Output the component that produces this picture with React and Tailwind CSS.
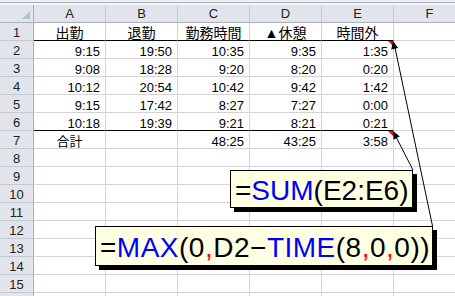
import React from "react";

const cols = ["A", "B", "C", "D", "E", "F"];

const data = [
  ["出勤", "退勤", "勤務時間", "▲休憩", "時間外", ""],
  ["9:15", "19:50", "10:35", "9:35", "1:35", ""],
  ["9:08", "18:28", "9:20", "8:20", "0:20", ""],
  ["10:12", "20:54", "10:42", "9:42", "1:42", ""],
  ["9:15", "17:42", "8:27", "7:27", "0:00", ""],
  ["10:18", "19:39", "9:21", "8:21", "0:21", ""],
  ["合計", "", "48:25", "43:25", "3:58", ""],
];

function arrowHead(fx, fy, tx, ty) {
  const dx = tx - fx;
  const dy = ty - fy;
  const len = Math.sqrt(dx * dx + dy * dy);
  const ux = dx / len;
  const uy = dy / len;
  const bx = tx - ux * 8;
  const by = ty - uy * 8;
  const px = -uy * 3.5;
  const py = ux * 3.5;
  return `${tx},${ty} ${bx + px},${by + py} ${bx - px},${by - py}`;
}

function Cell({ text, row, col }) {
  const centered = row === 1 || (row === 7 && col === 0);
  const heavy = (row === 1 || row === 6) && col < 5;
  return (
    <div
      className={`w-[72px] h-[18px] shrink-0 border-r border-b border-r-[#d4d4d4] ${
        heavy ? "border-b-black" : "border-b-[#d4d4d4]"
      } flex items-end ${centered ? "justify-center" : "justify-end pr-[5px]"} ${
        row === 1 ? "text-[14px] leading-[14px]" : "text-[13px] leading-[12px]"
      } text-black`}
    >
      {text}
    </div>
  );
}

export default function App() {
  const rows = [];
  for (let r = 1; r <= 16; r++) rows.push(r);

  return (
    <div
      className="relative w-[455px] h-[296px] overflow-hidden bg-white"
      style={{ fontFamily: '"Liberation Sans", "Noto Sans CJK JP", sans-serif' }}
    >
      {/* top strip */}
      <div className="h-[2px] bg-[#eef0f3]"></div>
      <div className="h-[1px] bg-[#a8afb8]"></div>
      <div className="h-[2px] bg-[#f4f5f7]"></div>

      {/* column headers */}
      <div className="flex h-[18px] bg-[#e1e5eb] border-b border-[#a9b1bc]">
        <div className="w-[34px] shrink-0 border-r border-[#a9b1bc] relative">
          <div className="absolute right-[3px] bottom-[3px] w-0 h-0 border-l-[8px] border-l-transparent border-b-[8px] border-b-[#b8c0ca]"></div>
        </div>
        {cols.map((c) => (
          <div
            key={c}
            className="w-[72px] shrink-0 border-r border-[#c3c9d1] flex items-center justify-center text-[13px] text-[#222]"
          >
            {c}
          </div>
        ))}
      </div>

      {/* rows */}
      {rows.map((r) => (
        <div key={r} className="flex h-[18px]">
          <div className="w-[34px] h-[18px] shrink-0 bg-[#e1e5eb] border-r border-r-[#a9b1bc] border-b border-b-[#c3c9d1] flex items-center justify-center pt-[2px] text-[13px] text-[#222]">
            {r < 16 ? r : ""}
          </div>
          {cols.map((c, i) => (
            <Cell key={c} text={data[r - 1] ? data[r - 1][i] : ""} row={r} col={i} />
          ))}
        </div>
      ))}

      {/* SUM comment */}
      <div className="absolute left-[230px] top-[170px] w-[183px] h-[38px] bg-[#ffffe1] border border-black shadow-[4px_4px_0_#000] pl-[4px] pt-[6px] text-[28px] leading-[28px] text-black whitespace-nowrap">
        =<span className="text-[#0000ff]">SUM</span>(E2:E6)
      </div>

      {/* MAX comment */}
      <div className="absolute left-[95px] top-[226px] w-[338px] h-[40px] bg-[#ffffe1] border border-black shadow-[4px_4px_0_#000] pl-[4px] pt-[7px] text-[28px] leading-[28px] tracking-[0.5px] text-black whitespace-nowrap">
        =<span className="text-[#0000ff]">MAX</span>(0<span className="text-[#ff0000]">,</span>D2−
        <span className="text-[#0000ff]">TIME</span>(8<span className="text-[#ff0000]">,</span>0
        <span className="text-[#ff0000]">,</span>0))
      </div>

      {/* comment indicators and leader lines */}
      <svg className="absolute left-0 top-0 pointer-events-none" width="455" height="296">
        <polygon points="388,41 393,41 393,46" fill="#ff0000" />
        <polygon points="388,131 393,131 393,136" fill="#ff0000" />
        <line x1="432.5" y1="226" x2="394" y2="43" stroke="#000" strokeWidth="1" />
        <line x1="413" y1="170" x2="394" y2="133" stroke="#000" strokeWidth="1" />
        <polygon points={arrowHead(432.5, 226, 393, 41)} fill="#000" />
        <polygon points={arrowHead(413, 170, 393, 131)} fill="#000" />
      </svg>
    </div>
  );
}
